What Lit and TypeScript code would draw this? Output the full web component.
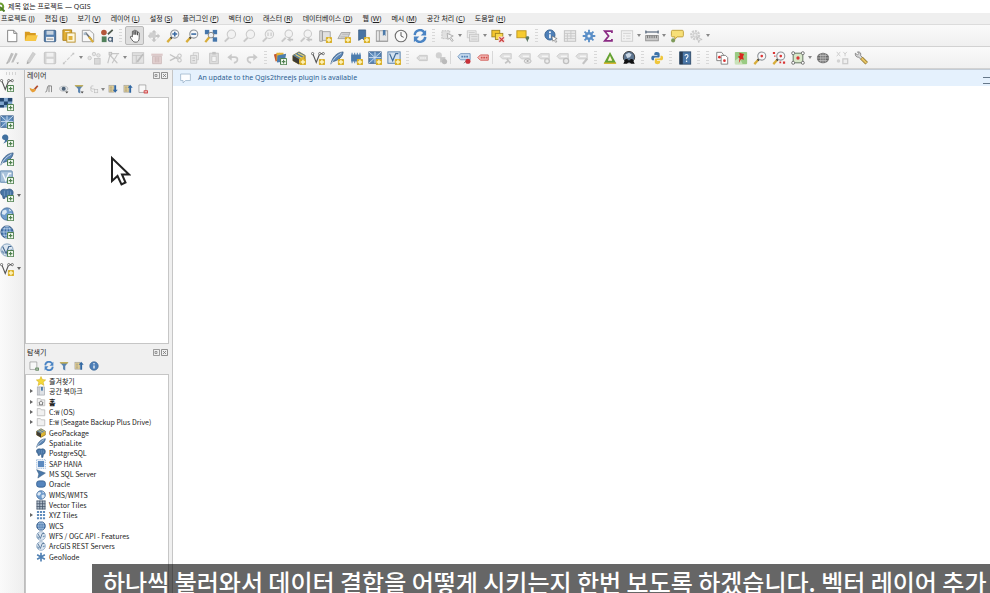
import { LitElement, html, svg, css, nothing, type SVGTemplateResult } from "lit";
import { customElement, property } from "lit/decorators.js";

type Art = SVGTemplateResult;

// Small marks laid over the lower right corner of a tool icon
const star = svg`<rect x="9" y="9" width="7" height="7" rx="1" fill="#d9b02c"/><path d="M12.5 10v5M10 12.5h5" stroke="#fff6c0" stroke-width="1.6"/>`;
const plus = svg`<rect x="8.6" y="8.6" width="7" height="7" rx="1" fill="#f4faf2" stroke="#4f8150" stroke-width="1.2"/><path d="M12.1 10v4.2M10 12.1h4.2" stroke="#4f8150" stroke-width="1.3"/>`;
const handleLine = svg`<path d="M6.5 9.5L1.5 15" stroke="#d8ad3a" stroke-width="2.6"/><path d="M7 9L5.4 10.8" stroke="#444" stroke-width="2.4"/>`;
const greyHandle = svg`<path d="M6.5 10L2 14.5" stroke="#c9c9c9" stroke-width="2.2"/>`;
const vee = svg`<path d="M2 3L6 13L10 3H14" fill="none" stroke="#555" stroke-width="1.3"/><g fill="#fff" stroke="#555" stroke-width=".9"><circle cx="1.8" cy="3" r="1.3"/><circle cx="10" cy="3" r="1.3"/><circle cx="14" cy="3" r="1.3"/></g>`;
const feather = svg`<path d="M1 15C2 9 6 2 15 1C15 6 10 11 3 12Z" fill="#5b86b5" stroke="#34587f" stroke-width=".8"/><path d="M1 15C4 9 8 5 13 2.5" fill="none" stroke="#dbe6f2" stroke-width=".9"/>`;
const globe = svg`<circle cx="8" cy="8" r="7" fill="#6f9ccc" stroke="#3e6594"/><path d="M3 4l4-1 1 3-3 3-3-1zM9 8l4-1 1 3-3 4-2-2zM10 2l3 2-2 1z" fill="#dce8f4"/>`;
const wcs = svg`<circle cx="8" cy="8" r="7" fill="#3f70a8" stroke="#274b78"/><path d="M1 8h14M3 4.3h10M3 11.7h10M8 1v14" stroke="#c2d8ee" stroke-width=".9"/><ellipse cx="8" cy="8" rx="3.6" ry="7" fill="none" stroke="#c2d8ee" stroke-width=".9"/>`;
const wfs = svg`<circle cx="8" cy="8" r="7" fill="#dce6f0" stroke="#7898b8"/><path d="M3 4L7 12L10 4H13" fill="none" stroke="#44688f" stroke-width="1.3"/><path d="M2 9l3 3M11 9l3-1" stroke="#7898b8" stroke-width="2"/>`;
const elephant = svg`<path d="M1 3C3 1 6 1 8 2C11 0 15 2 15 5C15 8 14 10 12 10L11 15H9L8.6 10.5L6 10L5.5 12H3.5L3 9C1 8 0 5 1 3Z" fill="#4673a3" stroke="#2f527b" stroke-width=".8"/><path d="M5 3v6M9 3v6M12 4v4" stroke="#7fa3ca" stroke-width=".8"/>`;
const box = svg`<path d="M1 5L8 1L15 5V11L8 15L1 11Z" fill="#e0b62f" stroke="#6d5717" stroke-width=".8"/><path d="M1 5L8 1L15 5L8 9Z" fill="#527da9"/><path d="M1 5L8 9V15L1 11Z" fill="#3d3b36"/><path d="M4 4L11 8M7 2.5L14 6" stroke="#f1d460" stroke-width="1.2"/>`;
const chip = svg`<rect x="2.5" y="4" width="11" height="8" fill="#4d7dae"/><path d="M3.5 2v12M6.500 2v12M9.500 2v12M12.500 2v12" stroke="#4d7dae" stroke-width="1.1"/>`;
const mesh = svg`<rect x="1" y="1" width="14" height="13" fill="#5f8dbd" stroke="#2f5583"/><path d="M1 7.5h14M8 1v13M1 1l7 6.5M15 1L8 7.5M8 7.5L1 14" stroke="#d5e4f3" stroke-width="1"/>`;
const refresh = svg`<path d="M2 7A6 6 0 0 1 13 4" fill="none" stroke="#4a84c4" stroke-width="2.8"/><path d="M15 1v6.5H8.8z" fill="#4a84c4"/><path d="M14 9A6 6 0 0 1 3 12" fill="none" stroke="#4a84c4" stroke-width="2.8"/><path d="M1 15V8.5H7.2z" fill="#4a84c4"/>`;
const gear = svg`<path d="M8 .8V15.2M.8 8H15.2M2.9 2.9L13.1 13.1M13.1 2.9L2.9 13.1" stroke="#5b8fc7" stroke-width="2.1"/><circle cx="8" cy="8" r="4.6" fill="#5b8fc7"/><circle cx="8" cy="8" r="1.8" fill="#eef3f8"/>`;
const funnel = svg`<path d="M1 2H15L10 8V15L6.500 13V8Z" fill="#5b84b0"/><path d="M1 2H15L13.4 4H2.6Z" fill="#d8b33a"/>`;
const info = svg`<circle cx="8" cy="8" r="6.8" fill="#4d7fb8" stroke="#35608f"/><path d="M8 7v5" stroke="#fff" stroke-width="2"/><circle cx="8" cy="4.4" r="1.2" fill="#fff"/>`;
const tag = svg`<path d="M2 8L5 5H14V11H5Z" fill="#d9d9d9" stroke="#c6c6c6"/><path d="M6 8h7" stroke="#f6f6f6" stroke-width="1.8" stroke-dasharray="1.6 .8"/>`;
const smallTag = svg`<path d="M1 6L4 3H14V9H4Z" fill="#dfdfdf" stroke="#cbcbcb"/><path d="M5.5 6h7" stroke="#f8f8f8" stroke-width="1.4"/>`;
const lens = svg`<circle cx="10" cy="5.8" r="4.6" fill="#f6f7f8" stroke="#8d9296" stroke-width="1.2"/>`;
const paleLens = svg`<circle cx="9.6" cy="6" r="4.8" fill="#f2f2f2" stroke="#cacaca" stroke-width="1.2"/>${greyHandle}`;
const folder = svg`<path d="M2 2.5H7L8.5 4.5H14V14H2Z" fill="#f1f1f1" stroke="#a9a9a9"/>`;
const book = svg`<rect x="2" y="1.5" width="11.5" height="13" fill="#dfe2e6" stroke="#9a9fa6"/><path d="M5 1.5v13" stroke="#9a9fa6"/><path d="M8 1.5h3V8L9.5 6.6L8 8z" fill="#4d7cab"/>`;
const sheet = svg`<rect x="1.5" y="2" width="8" height="11" fill="#ecd795" stroke="#9a9a9a"/><path d="M3 5h4M3 8h4M3 11h4" stroke="#777"/>`;

const icons: Record<string, Art> = {
  page: svg`<path d="M3 1.5H10L13.5 5V14.5H3Z" fill="#fff" stroke="#777"/><path d="M10 1.5V5H13.5" fill="none" stroke="#777"/>`,
  open: svg`<path d="M1 3H6L7.5 4.5H13.5V13H1Z" fill="#d79a20"/><path d="M3.5 7H15.8L13.5 13.8H1Z" fill="#f7c746"/>`,
  save: svg`<rect x="1.5" y="1.5" width="13" height="13" rx="1" fill="#557fae" stroke="#37597f"/><rect x="4" y="2" width="8" height="4.5" fill="#c9d4df"/><rect x="3.5" y="9" width="9" height="5" fill="#f4f4f4"/><path d="M4.5 11.5h7" stroke="#777"/>`,
  layout: svg`<path d="M1 1H11V13H1Z" fill="#e1ae31" stroke="#a87d19"/><rect x="5.5" y="4.5" width="9.5" height="10.5" fill="#fdf7dc" stroke="#b68b23"/><rect x="7.5" y="8" width="4.5" height="4.5" fill="#e1b23c"/><path d="M3.5 3h5" stroke="#fff"/>`,
  manager: svg`<path d="M1.5 1.5H10L14.5 5.5V14.5H1.5Z" fill="#f7f7f7" stroke="#989898"/><path d="M5 4L12 12" stroke="#6d7378" stroke-width="2"/><path d="M9 9l5 6" stroke="#d8ad3a" stroke-width="2.6"/><path d="M3 4h3v3H3z" fill="#a9b9c8"/>`,
  style: svg`<circle cx="4.500" cy="4" r="3.200" fill="#b4553a"/><path d="M9 6L14.500 1" stroke="#4f5a4d" stroke-width="2"/><rect x="2" y="8.5" width="5.500" height="6.5" fill="#51805a"/><circle cx="11.8" cy="11.8" r="2.2" fill="none" stroke="#51677e" stroke-width="1.4"/><path d="M14.2 9v6" stroke="#51677e" stroke-width="1.3"/>`,
  hand: svg`<path d="M5 9V3.2C5 1.8 6.8 1.8 6.9 3.2V6.5V2.2C7 1 8.8 1 8.9 2.2V6.5V3C9 1.9 10.8 1.9 10.9 3V7V4.5C11 3.5 12.8 3.5 12.8 4.6V10C12.8 13 11.5 15 9.5 15H8C6 15 5 13 3.2 10.5C2 8.5 3.5 7.6 5 9Z" fill="#fff" stroke="#4c4c4c" stroke-width="1"/>`,
  panSel: svg`<path d="M8 1l3 3H9.2v2.8H12V5l3 3-3 3V9.2H9.2V12H11l-3 3-3-3h1.8V9.2H4V11L1 8l3-3v1.8h2.8V4H5z" fill="#c5c5c5"/><rect x="3" y="4" width="7" height="6" fill="#cfcfcf"/>`,
  zoomIn: svg`${handleLine}${lens}<path d="M10 3v5.6M7.2 5.8h5.6" stroke="#3b6ba3" stroke-width="1.8"/>`,
  zoomOut: svg`${handleLine}${lens}<path d="M7.2 5.8h5.6" stroke="#3b6ba3" stroke-width="1.8"/>`,
  zoomFull: svg`<path d="M5 5L13 12M13 4L5 10" stroke="#666"/><rect x="1" y="1" width="5" height="5" fill="#4576ab"/><rect x="10" y="1" width="5" height="5" fill="#4576ab"/><rect x="10" y="9.5" width="5" height="5" fill="#4576ab"/><circle cx="8" cy="7" r="3.2" fill="#edf1f5" stroke="#777"/><path d="M6 9.5L1.5 15" stroke="#d8ad3a" stroke-width="2.6"/>`,
  paleZoom: paleLens,
  paleNative: svg`${paleLens}<path d="M8 4v4M11.5 4v4" stroke="#bbb"/>`,
  paleLast: svg`<circle cx="10" cy="5.5" r="4.300" fill="#f3f3f3" stroke="#cacaca" stroke-width="1.2"/>${greyHandle}<path d="M8 12l4-2.8v5.6zM12 11h3v2h-3z" fill="#c4c4c4"/>`,
  newMap: svg`<path d="M2 2h3v12H2zM5 3h9v10H5z" fill="#e1e1e1" stroke="#979797" stroke-width=".9"/>${star}`,
  new3d: svg`<path d="M1 11L5 4H15L12 11Z" fill="#d4d4d4" stroke="#999" stroke-width=".9"/><path d="M4 9h8M6 6h8" stroke="#b5b5b5"/>${star}`,
  bookmark: svg`<path d="M3 1h8v13L7 10.5 3 13z" fill="#4874a3" stroke="#34577e" stroke-width=".8"/>${star}`,
  bookmarks: svg`<rect x="1.5" y="2" width="13" height="12" fill="#e7e7e7" stroke="#9a9a9a"/><path d="M5 2v12M1.5 14h13" stroke="#9a9a9a"/><path d="M9 1h3v7l-1.5-1.5L9 8z" fill="#4c7aa9"/>`,
  clock: svg`<circle cx="8" cy="8" r="6.6" fill="#fafafa" stroke="#6f6f6f" stroke-width="1.3"/><path d="M8 3.5V8L11 9.5" fill="none" stroke="#555" stroke-width="1.1"/>`,
  refresh,
  paleSelect: svg`<path d="M1 2h9v9H1z" fill="#e0e0e0" stroke="#bdbdbd" stroke-dasharray="2 1"/><path d="M7 5l7 3-3 1.2 3 4-1.6 1-2.6-4L8 12z" fill="#f2f2f2" stroke="#a9a9a9"/>`,
  paleForm: svg`<path d="M1.5 2h10v8h-10z" fill="#eee" stroke="#c9c9c9"/><rect x="4" y="6" width="10.5" height="8" fill="#e4e4e4" stroke="#c4c4c4"/><path d="M3 4h7M6 8.5h7M6 11.5h7" stroke="#c9c9c9"/>`,
  deselect: svg`<rect x="1" y="1.5" width="9" height="7.5" fill="#f3c52e" stroke="#a1821e"/><rect x="5" y="5" width="8.5" height="7" fill="#f9d84c" stroke="#a1821e"/><rect x="8.5" y="8.5" width="7" height="7" rx="1" fill="#f1d5d5"/><path d="M9.6 9.6l5 5M14.6 9.6l-5 5" stroke="#cb3e3e" stroke-width="1.5"/>`,
  selectValue: svg`<rect x="1" y="2" width="10.5" height="8" fill="#f6cb2f" stroke="#b8921f"/><path d="M13.2 8.2c2.4 0 2.4 2.6.7 4L13 15l-1-2.8c-1.7-1.4-1.2-4 1.2-4z" fill="#5c7a63"/>`,
  identify: svg`<circle cx="6.8" cy="6.8" r="5.8" fill="#4d7fb8" stroke="#35608f"/><path d="M6.8 6v4.5" stroke="#fff" stroke-width="1.8"/><circle cx="6.8" cy="3.7" r="1.1" fill="#fff"/><path d="M9 8l6 3-2.4.8 2 2.6-1.2.9-1.9-2.6L10 14z" fill="#fff" stroke="#666" stroke-width=".7"/>`,
  paleTable: svg`<rect x="1.5" y="2" width="13" height="12" fill="#ebebeb" stroke="#bdbdbd"/><path d="M1.5 5h13M1.5 8h13M1.5 11h13M5 5v9M9 2v9" stroke="#c6c6c6"/>`,
  gear,
  sigma: svg`<path d="M12.500 4.500V2.300H4.200L8.700 8 4.200 13.700H12.500V11.500" fill="none" stroke="#8a2b84" stroke-width="2"/>`,
  paleList: svg`<rect x="1.5" y="2" width="13" height="12" fill="#f2f2f2" stroke="#cbcbcb"/><path d="M3.5 5h9M3.5 8h2M7 8h5M3.5 11h2M7 11h5" stroke="#d0d0d0"/>`,
  ruler: svg`<path d="M1 3.5h14M1 1.8v3.4M15 1.8v3.4" stroke="#3c4f66" stroke-width="1.2"/><rect x=".8" y="7.5" width="14.4" height="6" fill="#c8c8c8" stroke="#8e8e8e"/><path d="M3 7.5v3M5.5 7.5v3M8 7.5v3M10.500 7.5v3M13 7.500v3" stroke="#666"/>`,
  tip: svg`<path d="M3 1.5H14Q15.3 1.500 15.300 3V7.500Q15.300 9 14 9H8L5.500 12V9H3Q1.600 9 1.600 7.500V3Q1.600 1.500 3 1.500Z" fill="#f7df77" stroke="#bd9b35"/><circle cx="3.600" cy="13" r="2.300" fill="#7e9a5b"/>`,
  paleGear: svg`<circle cx="7" cy="7" r="4.500" fill="none" stroke="#cdcdcd" stroke-width="2.600" stroke-dasharray="2.400 1"/><circle cx="7" cy="7" r="2.400" fill="#e8e8e8" stroke="#c4c4c4"/><path d="M9 9l6 3-3 .8-.8 2.700z" fill="#eee" stroke="#b8b8b8" stroke-width=".8"/>`,
  palePencils: svg`<path d="M2 13L7 2l3 1-5 10zM7 13l5-11 2.500 1-5 10z" fill="#bdbdbd"/><path d="M1.500 15l.6-2.500 2.400 1zM13 13h3l-1.500 2z" fill="#a4a4a4"/>`,
  palePencil: svg`<path d="M3.500 12L10 1.500l3 1.800L6.500 13.500z" fill="#d0d0d0" stroke="#c0c0c0" stroke-width=".7"/><path d="M3 15l.5-3 3 1.600z" fill="#aaa"/>`,
  paleSave: svg`<rect x="1.500" y="1.500" width="13" height="13" rx="1" fill="#d4d4d4" stroke="#c0c0c0"/><rect x="4" y="2" width="8" height="4.500" fill="#f0f0f0"/><rect x="4" y="9" width="8" height="5" fill="#f3f3f3"/>`,
  paleLine: svg`<path d="M2 14L13 3" stroke="#cdcdcd" stroke-width="1.200" stroke-dasharray="4 1.500"/><path d="M1 13h2v2H1zM12 2h2v2h-2z" fill="#c4c4c4"/>`,
  palePoints: svg`<circle cx="3" cy="8" r="2" fill="#e4e4e4" stroke="#c9c9c9"/><circle cx="8" cy="3.500" r="2" fill="#e4e4e4" stroke="#c9c9c9"/><circle cx="13" cy="5" r="2" fill="#e4e4e4" stroke="#c9c9c9"/><rect x="8.500" y="8.500" width="6.500" height="6.500" fill="#d9d9d9" stroke="#c6c6c6"/>`,
  paleVertex: svg`<path d="M2 14L5 3H15M4 4l9 10M13 4L7 14" fill="none" stroke="#c6c6c6" stroke-width="1.300"/><rect x="3.500" y="1.500" width="3" height="3" fill="#ddd" stroke="#bbb"/>`,
  paleEditForm: svg`<rect x="1.500" y="2" width="13" height="12" fill="#e2e2e2" stroke="#c4c4c4"/><path d="M1.500 5h13M6 5v9" stroke="#c4c4c4"/><path d="M6 12l7-9 1.500 1-6.500 9z" fill="#bdbdbd"/>`,
  paleTrash: svg`<path d="M1.500 3h13v2.500h-13z" fill="#dcc8c8"/><path d="M3 6h10v8.500H3z" fill="#e3d2d2" stroke="#ccb8b8"/><path d="M6 7v6M8 7v6M10 7v6" stroke="#c9b3b3"/>`,
  paleCut: svg`<path d="M1 4l9 5M1 11l9-4.500" stroke="#c4c4c4" stroke-width="1.600"/><circle cx="12" cy="5.500" r="2" fill="none" stroke="#c4c4c4" stroke-width="1.200"/><circle cx="12" cy="10.500" r="2" fill="none" stroke="#c4c4c4" stroke-width="1.200"/>`,
  paleCopy: svg`<path d="M6 2h6v8H6z" fill="#eee" stroke="#cacaca"/><path d="M3 5h7v9H3z" fill="#e6e6e6" stroke="#c2c2c2"/><path d="M5 8h3M5 11h3" stroke="#bbb"/>`,
  palePaste: svg`<path d="M3 2.500h10v12H3z" fill="#dedede" stroke="#c2c2c2"/><path d="M6 1h4v3H6z" fill="#c2c2c2"/><path d="M5.500 6h5v6h-5z" fill="#f3f3f3" stroke="#c9c9c9"/>`,
  undo: svg`<path d="M5 7H10Q13.500 7 13 10.500Q12.500 13 9 13.500" fill="none" stroke="#c9c9c9" stroke-width="2"/><path d="M1.500 7L6.500 3v8z" fill="#c9c9c9"/>`,
  redo: svg`<path d="M11 7H6Q2.500 7 3 10.500Q3.500 13 7 13.500" fill="none" stroke="#c9c9c9" stroke-width="2"/><path d="M14.500 7L9.500 3v8z" fill="#c9c9c9"/>`,
  source: svg`<path d="M1 4l7-2 2 8-7 2z" fill="#c2552e"/><path d="M4 2h8v9H4z" fill="#e5b434"/><path d="M5 5l10-2-1.500 9-9 1z" fill="#4c7dad"/>${plus}`,
  newBox: svg`${box}${star}`,
  newShape: svg`${vee}${star}`,
  newFeather: svg`${feather}${star}`,
  newChip: svg`${chip}${star}`,
  newMesh: svg`${mesh}${star}`,
  newGpx: svg`<rect x="1" y="1" width="14" height="13" fill="#d3e1ef" stroke="#4d79a7"/><path d="M3 3l3.500 8L10 3h3" fill="none" stroke="#3e6a98" stroke-width="1.400"/>${star}`,
  paleTag: tag,
  paleDiagram: svg`<circle cx="5.500" cy="5" r="3.500" fill="#d1d1d1"/><path d="M7 7h6v6H7z" fill="#c6c6c6"/><circle cx="12" cy="12" r="3" fill="#bababa"/>`,
  blueTag: svg`<path d="M1 6.500L4 3H15V10H4Z" fill="#c8dcf0" stroke="#6e94bd"/><path d="M5 6.500h8" stroke="#5582b3" stroke-width="2" stroke-dasharray="2 .8"/><path d="M8 14l4-4" stroke="#666"/><circle cx="12.500" cy="11.800" r="2.900" fill="#c8323a"/>`,
  redTag: svg`<path d="M2 7.500L5 4.500H14V10.500H5Z" fill="#f3bcb9" stroke="#d0544f"/><path d="M5.500 7.500h7.500" stroke="#cf504c" stroke-width="2" stroke-dasharray="2 .8"/>`,
  palePin: svg`${smallTag}<path d="M9 9l4 5M7 14l4-3" stroke="#c4c4c4" stroke-width="2"/>`,
  paleEye: svg`${smallTag}<ellipse cx="11" cy="11.500" rx="4" ry="2.500" fill="#e8e8e8" stroke="#b6b6b6"/><circle cx="11" cy="11.500" r="1.200" fill="#aaa"/>`,
  paleMove: svg`${smallTag}<circle cx="11.500" cy="11.500" r="3.500" fill="#c6c6c6"/><path d="M9.500 11.500h4M11.500 9.500v4" stroke="#fff"/>`,
  paleTurn: svg`${smallTag}<circle cx="11.500" cy="11.500" r="3" fill="#e9e9e9" stroke="#c0c0c0" stroke-width="1.500"/>`,
  paleEdit: svg`${smallTag}<path d="M8 14l5-6 2 1.500-5 6z" fill="#c4c4c4"/>`,
  triangle: svg`<path d="M8 1L15 14H1Z" fill="#64a233"/><path d="M8 5.500L10.600 11H5.500Z" fill="#fff6d5"/><path d="M1 14h14" stroke="#d7b52e" stroke-width="1.600"/>`,
  search: svg`<circle cx="8" cy="7" r="6.500" fill="#5d7590" stroke="#333"/><path d="M4 4l4-2 3 2-2 3-3 1z" fill="#c9d6e3"/><path d="M4 9h2.500v1.500h3V9H12l2.500 5.500h-4.500l-1-2H7l-1 2H1.500z" fill="#111"/>`,
  python: svg`<path d="M8 1C4.500 1 5 3 5 4.500h3.500v.8H3C1 5.300 1 10.500 3 10.500h1.500V8.500Q4.500 7.500 6 7.500h4Q11 7.500 11 6V3Q11 1 8 1Z" fill="#3b72a8"/><path d="M8.500 15C12 15 11.500 13 11.500 11.500H8V10.700h5.500C15.500 10.700 15.500 5.500 13.500 5.500H12V7.500Q12 8.500 10.500 8.500H6.500Q5.500 8.500 5.500 10V13Q5.500 15 8.500 15Z" fill="#efc63c"/>`,
  help: svg`<rect x="2" y="1" width="12.500" height="14" fill="#4a77a8" stroke="#2e4967"/><path d="M2 1h3.500v14H2z" fill="#27394f"/><path d="M8 5.500Q8 4 9.700 4Q11.500 4 11.500 5.700Q11.500 7 9.800 8v1.500" fill="none" stroke="#fff" stroke-width="1.200"/><circle cx="9.800" cy="11.700" r=".9" fill="#fff"/>`,
  copyRed: svg`<path d="M2 1.500h5.500L9.500 4v7H2z" fill="#fff" stroke="#777"/><path d="M7 5h5l2.500 2.500V15H7z" fill="#fff" stroke="#777"/><circle cx="5" cy="7" r="1.500" fill="#d82f2f"/><circle cx="10.800" cy="11" r="1.500" fill="#d82f2f"/>`,
  pinMap: svg`<rect x="1" y="1" width="14" height="14" rx="1" fill="#9acb83"/><path d="M1 11l5-4 4 8H1z" fill="#c9e2b9"/><path d="M6 2l5.500 1.500-1.200 3 1 3.500-3.300-.8L5.500 14l.8-5.300L4.500 6.500l2.200-1z" fill="#d8281f"/>`,
  redLens: svg`${handleLine}${lens}<circle cx="10" cy="5.800" r="1.500" fill="#da3838"/>`,
  redLensPts: svg`${handleLine}${lens}<circle cx="10" cy="5.800" r="1.500" fill="#da3838"/><path d="M1 1h2.500v2.500H1zM12.500 12H15v2.500h-2.500zM8.500 12h2v2h-2zM2.500 5h1.500v1.500H2.500z" fill="#d93636"/>`,
  extent: svg`<rect x="2.500" y="2.500" width="11" height="11" fill="#d7e7c9" stroke="#6d7d69" stroke-width="1.200"/><g fill="#fff" stroke="#666"><circle cx="2.500" cy="2.500" r="1.700"/><circle cx="13.500" cy="2.500" r="1.700"/><circle cx="2.500" cy="13.500" r="1.700"/><circle cx="13.500" cy="13.500" r="1.700"/></g><circle cx="8" cy="8" r="1.900" fill="#d83434"/>`,
  gridGlobe: svg`<ellipse cx="8" cy="8" rx="7" ry="6" fill="#686868"/><path d="M1 8h14M3 5h10M3 11h10M5.500 2.500v11M8 2v12M10.500 2.500v11" stroke="#cfcfcf" stroke-width=".8"/>`,
  coords: svg`<path d="M2 1l4 5M6 1L2 6M9.500 1l2 2.500L13.500 1M11.500 3.500V6" stroke="#cdcdcd" stroke-width="1.100" fill="none"/><circle cx="4" cy="11.500" r="2" fill="#d3d3d3"/><rect x="9" y="9" width="5.500" height="5.500" fill="#eee" stroke="#cacaca" stroke-width="1.400"/>`,
  wrench: svg`<path d="M1.500 2.500L4 4.500 5.500 3 4 1C7 .5 8.500 3 7.500 5L10 8 8 9.800 5.500 7C3 7.500 1 5.500 1.500 2.500Z" fill="#d9d9d9" stroke="#777" stroke-width=".9"/><path d="M8.500 8L14.500 14" stroke="#8a702a" stroke-width="4"/><path d="M8.700 8.200L14.200 13.700" stroke="#e7c565" stroke-width="2.400"/>`,
  addVector: svg`${vee}${plus}`,
  addRaster: svg`<path d="M0 1h14v11H0z" fill="#7fa5ce"/><path d="M0 1h4.500v4H0zM9 1h5v4H9zM4.500 5H9v4H4.500zM0 9h4.500v3H0z" fill="#22456f"/>${plus}`,
  addMesh: svg`${mesh}${plus}`,
  addComma: svg`<path d="M4.500 2C9 1 10.500 4.500 9 8C8 10 6 11.500 3.500 12C5.500 10.500 6 9 5.500 8C1.500 8 1.500 3 4.500 2Z" fill="#41709f"/>${plus}`,
  addFeather: svg`${feather}${plus}`,
  addVirtual: svg`<rect x="0" y="1" width="14" height="13" rx="1" fill="#a9c2db" stroke="#5680aa"/><path d="M3 4l3.500 8L10 4h3" fill="none" stroke="#f4f8fc" stroke-width="1.600"/>${plus}`,
  addPg: svg`${elephant}${plus}`,
  addWms: svg`${globe}${plus}`,
  addWcs: svg`${wcs}${plus}`,
  addWfs: svg`${wfs}${plus}`,
  brush: svg`<path d="M8 7l5-5 2 1.500-5 6z" fill="#b14b2c"/><path d="M1 6q4 3 7 1l3 3q-3 4.500-6 3Q1 11 1 6z" fill="#e7a03a"/>`,
  styleRope: svg`<path d="M2 13Q5 13 5 8T8 2.500V13M12 3v10M8 3h4" fill="none" stroke="#777" stroke-width="1.300"/>`,
  eye: svg`<ellipse cx="7.500" cy="7.500" rx="6.500" ry="4" fill="#e1e4e8" stroke="#a2a6aa"/><circle cx="7.500" cy="7.500" r="3.200" fill="#4f6479"/><path d="M10 12h5l-2.500 3z" fill="#444"/>`,
  funnel,
  funnelDown: svg`${funnel}<path d="M10.500 12h5l-2.500 3z" fill="#444"/>`,
  expr: svg`<path d="M7 3Q3 2 3 5T6 8H9M3 5v5q0 2 3 2" fill="none" stroke="#c2c2c2" stroke-width="1.300"/><rect x="9" y="9" width="5" height="5" fill="#eee" stroke="#bbb"/>`,
  expand: svg`${sheet}<path d="M11.500 2v8" stroke="#2f66a2" stroke-width="3"/><path d="M7.500 9h8l-4 5z" fill="#2f66a2"/>`,
  collapse: svg`${sheet}<path d="M11.500 5v9" stroke="#2f66a2" stroke-width="3"/><path d="M7.500 6h8l-4-5z" fill="#2f66a2"/>`,
  remove: svg`<path d="M1.500 1.500h11v12h-11z" fill="#f8f8f8" stroke="#8c8c8c"/><rect x="9" y="10" width="7" height="5" rx="1" fill="#d14d4d"/><path d="M10.500 12.500h4" stroke="#fff" stroke-width="1.300"/>`,
  addSel: svg`<path d="M1.500 1.500h11v12h-11z" fill="#f8f8f8" stroke="#8c8c8c"/><rect x="10" y="10.500" width="6" height="5" rx="1" fill="#6b8d69"/><path d="M11.500 13h3" stroke="#fff"/>`,
  info,
  fav: svg`<path d="M8 .8l2.200 4.900 5.300.5-4 3.600 1.200 5.300L8 12.300l-4.700 2.800 1.200-5.300-4-3.600 5.300-.5z" fill="#f4d83a" stroke="#cfa91e" stroke-width=".8"/>`,
  book,
  home: svg`${folder}<path d="M4.500 9.500L8 6l3.500 3.500M5.500 9v3.500h5V9" fill="none" stroke="#555" stroke-width="1.200"/>`,
  folder,
  box,
  feather,
  elephant,
  hana: svg`<rect x="3" y="3" width="10" height="10" fill="#5c8ac0"/><rect x="1" y="1" width="14" height="14" fill="none" stroke="#7da4cf" stroke-width="1.400" stroke-dasharray="1.500 1.500"/>`,
  mssql: svg`<path d="M1 1L15 6.500 3 14.500 4.500 8z" fill="#4b78a9" stroke="#33597f" stroke-width=".8"/>`,
  oracle: svg`<rect x="1" y="3" width="14" height="10" rx="4" fill="#5585bd" stroke="#35608f" stroke-width="1.400"/>`,
  globe,
  tiles: svg`<rect x="1.500" y="1.500" width="13" height="13" fill="#b3c0ce"/><path d="M1 6h14M1 10.500h14M6 1v14M10.500 1v14M1 1.500h14M1 14.500h14M1.500 1v14M14.500 1v14" stroke="#45556a" stroke-width="1.300"/>`,
  xyz: svg`<path d="M1.500 3h13M1.500 8h13M1.500 13h13" stroke="#5f8cbc" stroke-width="3.200" stroke-dasharray="3.400 1.400"/>`,
  wcs,
  wfs,
  node: svg`<path d="M8 1v14M1.800 4.500l12.400 7M14.200 4.500L1.800 11.500" stroke="#4f80b3" stroke-width="2.600"/>`,
  note: svg`<path d="M2 2.500H14V10.500H8L5 13.500V10.500H2Z" fill="#fcfdff" stroke="#9fb6cc"/>`,
};

const draw = (name: string) => svg`<svg viewBox="0 0 16 16" aria-hidden="true">${icons[name]}</svg>`;

/** One toolbar entry is "icon:label"; "|" is a grip, "/" a thin divider, "v" a drop-down arrow. */
const fileBar = [
  "page:새로 만들기", "open:열기", "save:저장", "layout:새 조판", "manager:조판 관리자", "style:스타일 관리자", "|",
  "hand:이동", "panSel:선택 영역으로 이동", "zoomIn:확대", "zoomOut:축소", "zoomFull:전체 보기", "paleZoom:선택 확대", "paleZoom:레이어 확대",
  "paleNative:원본 해상도", "paleLast:이전 보기", "paleLast:다음 보기", "newMap:새 맵 뷰", "new3d:새 3D 뷰", "bookmark:새 북마크",
  "bookmarks:북마크 보기", "clock:시간 제어", "refresh:새로고침", "|",
  "paleSelect:객체 선택", "v", "paleForm:값으로 선택", "v", "deselect:선택 해제", "v", "selectValue:위치로 선택", "|",
  "identify:객체 확인", "paleTable:속성 테이블", "gear:공간 처리", "sigma:통계", "paleList:목록", "v", "ruler:측정", "v", "tip:맵 도움말", "paleGear:작업", "v",
];
const editBar = [
  "palePencils:현재 편집", "palePencil:편집 전환", "paleSave:편집 저장", "paleLine:디지타이즈", "v", "palePoints:포인트 추가", "paleVertex:꼭짓점 도구", "v",
  "paleEditForm:속성 수정", "paleTrash:삭제", "paleCut:잘라내기", "paleCopy:복사", "palePaste:붙여넣기", "undo:실행 취소", "redo:다시 실행", "|",
  "source:데이터 원본 관리자", "newBox:새 GeoPackage", "newShape:새 Shapefile", "newFeather:새 SpatiaLite", "newChip:새 임시 레이어", "newMesh:새 메시", "newGpx:새 GPX", "|",
  "paleTag:라벨", "paleDiagram:다이어그램", "/", "blueTag:고정 라벨", "redTag:미배치 라벨", "/",
  "palePin:라벨 고정", "paleEye:라벨 표시", "paleMove:라벨 이동", "paleTurn:라벨 회전", "paleEdit:라벨 변경", "|",
  "triangle:지형", "search:메타 검색", "|", "python:Python 콘솔", "|", "help:도움말", "|", "|",
  "copyRed:좌표 복사", "pinMap:맵 핀", "redLens:좌표 확대", "redLensPts:다중 확대", "extent:범위", "v", "gridGlobe:변환", "coords:좌표", "wrench:설정",
];
const layerBar = ["brush:스타일", "styleRope:그룹 추가", "eye:맵 테마", "funnelDown:필터", "expr:표현식 필터", "v", "expand:모두 펼치기", "collapse:모두 접기", "remove:제거"];
const browserBar = ["addSel:레이어 추가", "refresh:새로고침", "funnel:필터", "collapse:모두 접기", "info:속성"];
const rail = ["addVector:벡터", "addRaster:래스터", "addMesh:메시", "addComma:텍스트", "addFeather:SpatiaLite", "addVirtual:가상", "addPg:PostGIS", "addWms:WMS", "addWcs:WCS", "addWfs:WFS", "newShape:Shapefile"];

const menus: [string, string][] = [
  ["프로젝트", "J"], ["편집", "E"], ["보기", "V"], ["레이어", "L"], ["설정", "S"], ["플러그인", "P"], ["벡터", "O"],
  ["래스터", "R"], ["데이터베이스", "D"], ["웹", "W"], ["메시", "M"], ["공간 처리", "C"], ["도움말", "H"],
];

interface Source { icon: string; name: string; open?: boolean; strong?: boolean }
const sources: Source[] = [
  { icon: "fav", name: "즐겨찾기" },
  { icon: "book", name: "공간 북마크", open: true },
  { icon: "home", name: "홈", open: true, strong: true },
  { icon: "folder", name: "C:₩ (OS)", open: true },
  { icon: "folder", name: "E:₩ (Seagate Backup Plus Drive)", open: true },
  { icon: "box", name: "GeoPackage" },
  { icon: "feather", name: "SpatiaLite" },
  { icon: "elephant", name: "PostgreSQL" },
  { icon: "hana", name: "SAP HANA" },
  { icon: "mssql", name: "MS SQL Server" },
  { icon: "oracle", name: "Oracle" },
  { icon: "globe", name: "WMS/WMTS" },
  { icon: "tiles", name: "Vector Tiles" },
  { icon: "xyz", name: "XYZ Tiles", open: true },
  { icon: "wcs", name: "WCS" },
  { icon: "wfs", name: "WFS / OGC API - Features" },
  { icon: "wfs", name: "ArcGIS REST Servers" },
  { icon: "node", name: "GeoNode" },
];

const reset = css`
  * { box-sizing: border-box; }
  button { appearance: none; border: 0; padding: 0; margin: 0; background: none; font: inherit; color: inherit; display: grid; place-items: center; }
  svg { display: block; }
`;

@customElement("tool-strip")
class ToolStrip extends LitElement {
  @property({ attribute: false }) items: string[] = [];
  @property({ reflect: true }) size = "large";

  static styles = [reset, css`
    :host { display: flex; align-items: center; --slot: 19px; --icon: 14px; --more: 6px; }
    :host([size="small"]) { --slot: 15px; --icon: 10px; --more: 4px; }
    .tool { width: var(--slot); height: 19px; flex: none; }
    .tool svg { width: var(--icon); height: var(--icon); }
    .active { background: #dedede; border: 1px solid #b9b9b9; border-radius: 2px; }
    .more { width: var(--more); height: 19px; flex: none; }
    .more::after { content: ""; border: 2px solid transparent; border-top: 3px solid #888; border-bottom: 0; }
    .grip { width: 9px; height: 13px; flex: none; display: grid; place-items: center; }
    .grip::after { content: ""; width: 3px; height: 13px; background: repeating-linear-gradient(#d8d8d8 0 1px, transparent 1px 3px); }
    .divider { width: 4px; height: 13px; flex: none; border-left: 1px solid #d8d8d8; }
  `];

  render() {
    return this.items.map((item) => {
      if (item === "|") return html`<span class="grip"></span>`;
      if (item === "/") return html`<span class="divider"></span>`;
      if (item === "v") return html`<button class="more" aria-label="더 보기"></button>`;
      const [icon, label] = item.split(":");
      return html`<button class="tool ${icon === "hand" ? "active" : ""}" aria-label=${label}>${draw(icon)}</button>`;
    });
  }
}

@customElement("dock-title")
class DockTitle extends LitElement {
  @property() label = "";

  static styles = [reset, css`
    :host { display: flex; align-items: center; height: 11px; flex: none; padding: 0 1px 0 2px; font-size: 7px; }
    .name { flex: 1; font: inherit; margin: 0; }
    .ctl { width: 8px; height: 8px; color: #777; }
    .ctl svg { width: 7px; height: 7px; }
  `];

  render() {
    return html`
      <h2 class="name">${this.label}</h2>
      <button class="ctl" aria-label="분리"><svg viewBox="0 0 7 7" fill="none" stroke="currentColor"><path d="M.5.5h6v6h-6zM2 4.500v-2h2v2z" stroke-width=".7"/></svg></button>
      <button class="ctl" aria-label="닫기"><svg viewBox="0 0 7 7" fill="none" stroke="currentColor"><path d="M.5.5h6v6h-6zM2 2l3 3M5 2L2 5" stroke-width=".8"/></svg></button>
    `;
  }
}

@customElement("app-root")
class AppRoot extends LitElement {
  static styles = [reset, css`
    :host { display: flex; flex-direction: column; position: relative; height: 100vh; overflow: hidden; background: #f0f0f0; color: #222; font-family: "Noto Sans", "Noto Sans CJK KR", sans-serif; font-size: 7px; line-height: 10px; }
    .title { display: flex; align-items: center; gap: 3px; height: 13px; flex: none; background: #fff; }
    .logo { width: 5px; height: 10px; }
    .title h1 { font: inherit; margin: 0; }
    .menu { display: flex; align-items: center; gap: 10px; height: 12px; flex: none; padding-left: 1px; background: #efefef; border-bottom: 1px solid #dcdcdc; white-space: nowrap; }
    .menu button { display: block; }
    .bar { height: 22px; flex: none; padding-left: 2px; background: linear-gradient(#fafafa, #f0f0f0); border-bottom: 1px solid #d2d2d2; }
    .work { flex: 1; min-height: 0; display: flex; border-top: 1px solid #c3ccd6; }
    .rail { width: 25px; flex: none; padding-top: 2px; background: linear-gradient(90deg, #fafafa, #eeeeee); border-right: 1px solid #bdbdbd; }
    .rail-grip { width: 10px; height: 3px; margin: 0 0 1px 6px; background: repeating-linear-gradient(90deg, #d4d4d4 0 1px, transparent 1px 3px); }
    .rail-list { display: grid; grid-auto-rows: 1fr; height: 202px; }
    .rail-item { display: flex; align-items: center; gap: 3px; }
    .rail-item svg { width: 14px; height: 14px; }
    .rail-more { width: 4px; height: 10px; }
    .rail-more::after { content: ""; border: 2px solid transparent; border-top: 3px solid #666; border-bottom: 0; }
    .docks { width: 144px; flex: none; display: flex; flex-direction: column; }
    .dock-bar { height: 16px; flex: none; padding-left: 1px; }
    .layers { height: 247px; flex: none; background: #fff; border: 1px solid #c6c6c6; }
    .split-h { height: 3px; flex: none; }
    .tree { flex: 1; min-height: 0; padding-top: 1px; background: #fff; border: 1px solid #c6c6c6; border-bottom: 0; overflow: hidden; font-family: "Noto Sans CJK KR", sans-serif; }
    .rows { list-style: none; margin: 0; padding: 0; display: grid; grid-auto-rows: 1fr; height: 186px; }
    .row { display: flex; align-items: center; white-space: nowrap; }
    .twist { width: 10px; height: 8px; flex: none; }
    .twist::after { content: ""; }
    .open::after { border: 2px solid transparent; border-left: 3px solid #666; border-right: 0; }
    .row svg { width: 10px; height: 10px; flex: none; margin-right: 3px; }
    .strong { font-weight: 900; }
    .split-v { width: 4px; flex: none; border-right: 1px solid #c6c6c6; }
    .map { flex: 1; min-width: 0; background: #fff; }
    .notice { display: flex; align-items: center; gap: 6px; height: 16px; padding-left: 6px; background: #e5f1fd; color: #2d5f91; }
    .notice svg { width: 13px; height: 13px; }
    .notice p { flex: 1; margin: 0; }
    .notice-btn { width: 7px; height: 7px; margin-top: 4px; border: solid #66788a; border-width: 1px 0; }
    .pointer { position: absolute; left: 110px; top: 155px; width: 21px; height: 31px; }
    .caption { position: absolute; left: 92px; right: 0; bottom: 0; height: 29px; margin: 0; padding-left: 11px; overflow: hidden; background: rgba(0, 0, 0, .6); color: #fff; font: 500 24px/35px "Noto Sans CJK KR", sans-serif; white-space: nowrap; }
  `];

  render() {
    return html`
      <header class="title">
        <svg class="logo" viewBox="0 0 5 10" aria-hidden="true"><path d="M0 1.500A3.200 3.200 0 0 1 0 8" fill="none" stroke="#6b9c2f" stroke-width="2"/><path d="M0 5L4.500 9.500" stroke="#4f7f27" stroke-width="2"/></svg>
        <h1>제목 없는 프로젝트 — QGIS</h1>
      </header>
      <nav class="menu">${menus.map(([name, key]) => html`<button>${name} (<u>${key}</u>)</button>`)}</nav>
      <tool-strip class="bar" .items=${fileBar}></tool-strip>
      <tool-strip class="bar" .items=${editBar}></tool-strip>
      <main class="work">
        <aside class="rail">
          <div class="rail-grip"></div>
          <div class="rail-list">
            ${rail.map((item) => {
              const [icon, label] = item.split(":");
              return html`<div class="rail-item">
                <button aria-label=${label}>${draw(icon)}</button>
                ${icon === "addPg" || icon === "newShape" ? html`<button class="rail-more" aria-label="더 보기"></button>` : nothing}
              </div>`;
            })}
          </div>
        </aside>
        <div class="docks">
          <dock-title label="레이어"></dock-title>
          <tool-strip class="dock-bar" size="small" .items=${layerBar}></tool-strip>
          <div class="layers"></div>
          <div class="split-h"></div>
          <dock-title label="탐색기"></dock-title>
          <tool-strip class="dock-bar" size="small" .items=${browserBar}></tool-strip>
          <div class="tree">
            <ul class="rows">
              ${sources.map((s) => html`<li class="row">
                ${s.open ? html`<button class="twist open" aria-label="펼치기"></button>` : html`<span class="twist"></span>`}
                ${draw(s.icon)}<span class=${s.strong ? "strong" : ""}>${s.name}</span>
              </li>`)}
            </ul>
          </div>
        </div>
        <div class="split-v"></div>
        <section class="map">
          <div class="notice">
            ${draw("note")}
            <p>An update to the Qgis2threejs plugin is available</p>
            <button class="notice-btn" aria-label="메시지 메뉴"></button>
          </div>
        </section>
      </main>
      <svg class="pointer" viewBox="0 0 21 31" aria-hidden="true"><path d="M2 3V26L7.500 21L11.500 29.500L15.500 27.500L12 19.500H19Z" fill="#fff" stroke="#222" stroke-width="2"/></svg>
      <p class="caption">하나씩 불러와서 데이터 결합을 어떻게 시키는지 한번 보도록 하겠습니다. 벡터 레이어 추가</p>
    `;
  }
}
